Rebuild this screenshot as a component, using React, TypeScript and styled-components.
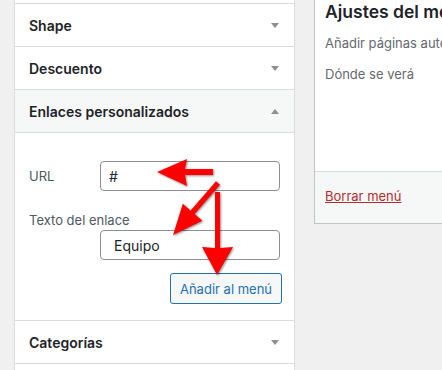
import React from 'react';
import styled, { createGlobalStyle } from 'styled-components';

const GlobalStyle = createGlobalStyle`
  html, body {
    margin: 0;
    padding: 0;
    background: #f0f0f1;
    overflow: hidden;
  }
  body {
    font-family: Inter, "Noto Sans", "Liberation Sans", sans-serif;
    font-size: 13px;
    color: #1d2327;
  }
`;

const Page = styled.div`
  position: relative;
  width: 442px;
  height: 370px;
  display: flex;
  align-items: flex-start;
  overflow: hidden;
`;

const Sidebar = styled.div`
  box-sizing: border-box;
  width: 281px;
  height: 370px;
  margin-left: 14px;
  padding-top: 3px;
  background: #fff;
  border-left: 1px solid #dcdcde;
  border-right: 1px solid #dcdcde;
  flex-shrink: 0;
`;

const Section = styled.div`
  border-top: 1px solid #dcdcde;
`;

const SectionHeader = styled.div<{ $open?: boolean }>`
  height: 42px;
  display: flex;
  align-items: center;
  justify-content: space-between;
  padding: 0 14px 0 14px;
  background: ${(p) => (p.$open ? '#f6f7f7' : '#fff')};
  font-size: 14px;
  font-weight: 600;
  color: #1d2327;
`;

const Chevron = styled.span<{ $up?: boolean }>`
  width: 0;
  height: 0;
  margin-right: 1px;
  border-left: 4px solid transparent;
  border-right: 4px solid transparent;
  ${(p) =>
    p.$up ? 'border-bottom: 5px solid #8c8f94;' : 'border-top: 5px solid #8c8f94;'}
`;

const SectionBody = styled.div`
  border-top: 1px solid #dcdcde;
  padding: 28px 13px 18px 14px;
  height: 188px;
  box-sizing: border-box;
`;

const FieldRow = styled.div`
  display: flex;
  align-items: center;
`;

const Label = styled.label`
  color: #50575e;
  font-size: 13px;
  width: 71px;
  flex-shrink: 0;
`;

const BlockLabel = styled.div`
  color: #50575e;
  font-size: 13px;
  margin-top: 19px;
  line-height: 20px;
`;

const TextInput = styled.input`
  box-sizing: border-box;
  width: 180px;
  height: 30px;
  border: 1px solid #8c8f94;
  border-radius: 4px;
  background: #fff;
  padding: 0 8px;
  font-family: inherit;
  font-size: 14px;
  color: #1d2327;
  outline: none;
`;

const IndentedInput = styled(TextInput)`
  display: block;
  margin: 0 0 0 71px;
  padding-left: 13px;
`;

const ButtonRow = styled.div`
  display: flex;
  justify-content: flex-end;
  margin-top: 13px;
`;

const Button = styled.button`
  box-sizing: border-box;
  height: 31px;
  width: 112px;
  padding: 0;
  margin-right: -1px;
  border: 1px solid #2271b1;
  border-radius: 3px;
  background: #f6f7f7;
  color: #2271b1;
  font-family: inherit;
  font-size: 13px;
`;

const Panel = styled.div`
  box-sizing: border-box;
  width: 400px;
  margin-left: 19px;
  flex-shrink: 0;
  background: #fff;
  border-left: 1px solid #c3c4c7;
  border-bottom: 1px solid #c3c4c7;
`;

const PanelBody = styled.div`
  height: 171px;
  padding: 0 10px;
  box-sizing: border-box;
`;

const PanelTitle = styled.h3`
  margin: 0;
  font-size: 17.5px;
  line-height: 24px;
  font-weight: 600;
  white-space: nowrap;
  color: #1d2327;
`;

const SettingLabel = styled.div<{ $gap: number }>`
  margin-top: ${(p) => p.$gap}px;
  line-height: 20px;
  font-size: 13px;
  color: #646970;
  white-space: nowrap;
`;

const PanelFooter = styled.div`
  height: 52px;
  box-sizing: border-box;
  border-top: 1px solid #dcdcde;
  background: #f6f7f7;
  padding: 14px 10px 0;
`;

const DeleteLink = styled.a`
  color: #b32d2e;
  text-decoration: underline;
  font-size: 13px;
  line-height: 20px;
`;

const Annotations = styled.svg`
  position: absolute;
  left: 0;
  top: 0;
  pointer-events: none;
  filter: drop-shadow(1px 1px 1px rgba(0, 0, 0, 0.45));
`;

const AccordionItem = ({ title, open }: { title: string; open?: boolean }) => (
  <Section>
    <SectionHeader $open={open}>
      {title}
      <Chevron $up={open} />
    </SectionHeader>
  </Section>
);

export default function App() {
  return (
    <>
      <GlobalStyle />
      <Page>
        <Sidebar>
          <AccordionItem title="Shape" />
          <AccordionItem title="Descuento" />
          <Section>
            <SectionHeader $open>
              Enlaces personalizados
              <Chevron $up />
            </SectionHeader>
            <SectionBody>
              <FieldRow>
                <Label>URL</Label>
                <TextInput defaultValue="#" />
              </FieldRow>
              <BlockLabel>Texto del enlace</BlockLabel>
              <IndentedInput defaultValue="Equipo" />
              <ButtonRow>
                <Button>Añadir al menú</Button>
              </ButtonRow>
            </SectionBody>
          </Section>
          <AccordionItem title="Categorías" />
          <Section />
        </Sidebar>
        <Panel>
          <PanelBody>
            <PanelTitle>Ajustes del menú</PanelTitle>
            <SettingLabel $gap={9}>Añadir páginas automáticamente</SettingLabel>
            <SettingLabel $gap={11}>Dónde se verá</SettingLabel>
          </PanelBody>
          <PanelFooter>
            <DeleteLink href="#">Borrar menú</DeleteLink>
          </PanelFooter>
        </Panel>
        <Annotations width="442" height="370" viewBox="0 0 442 370">
          <path d="M157 172 L187 159 L185 169 L213 169 L213 175 L185 175 L187 186 Z" fill="#ff0000" />
          <path
            d="M173 235 L202.4 220.8 L194.6 214.1 L220 184.8 L216 181.2 L190.6 210.5 L182.8 203.8 Z"
            fill="#ff0000"
          />
          <path d="M217 275 L233 247 L220 248 L220 192 L215 192 L215 248 L202 247 Z" fill="#ff0000" />
        </Annotations>
      </Page>
    </>
  );
}
